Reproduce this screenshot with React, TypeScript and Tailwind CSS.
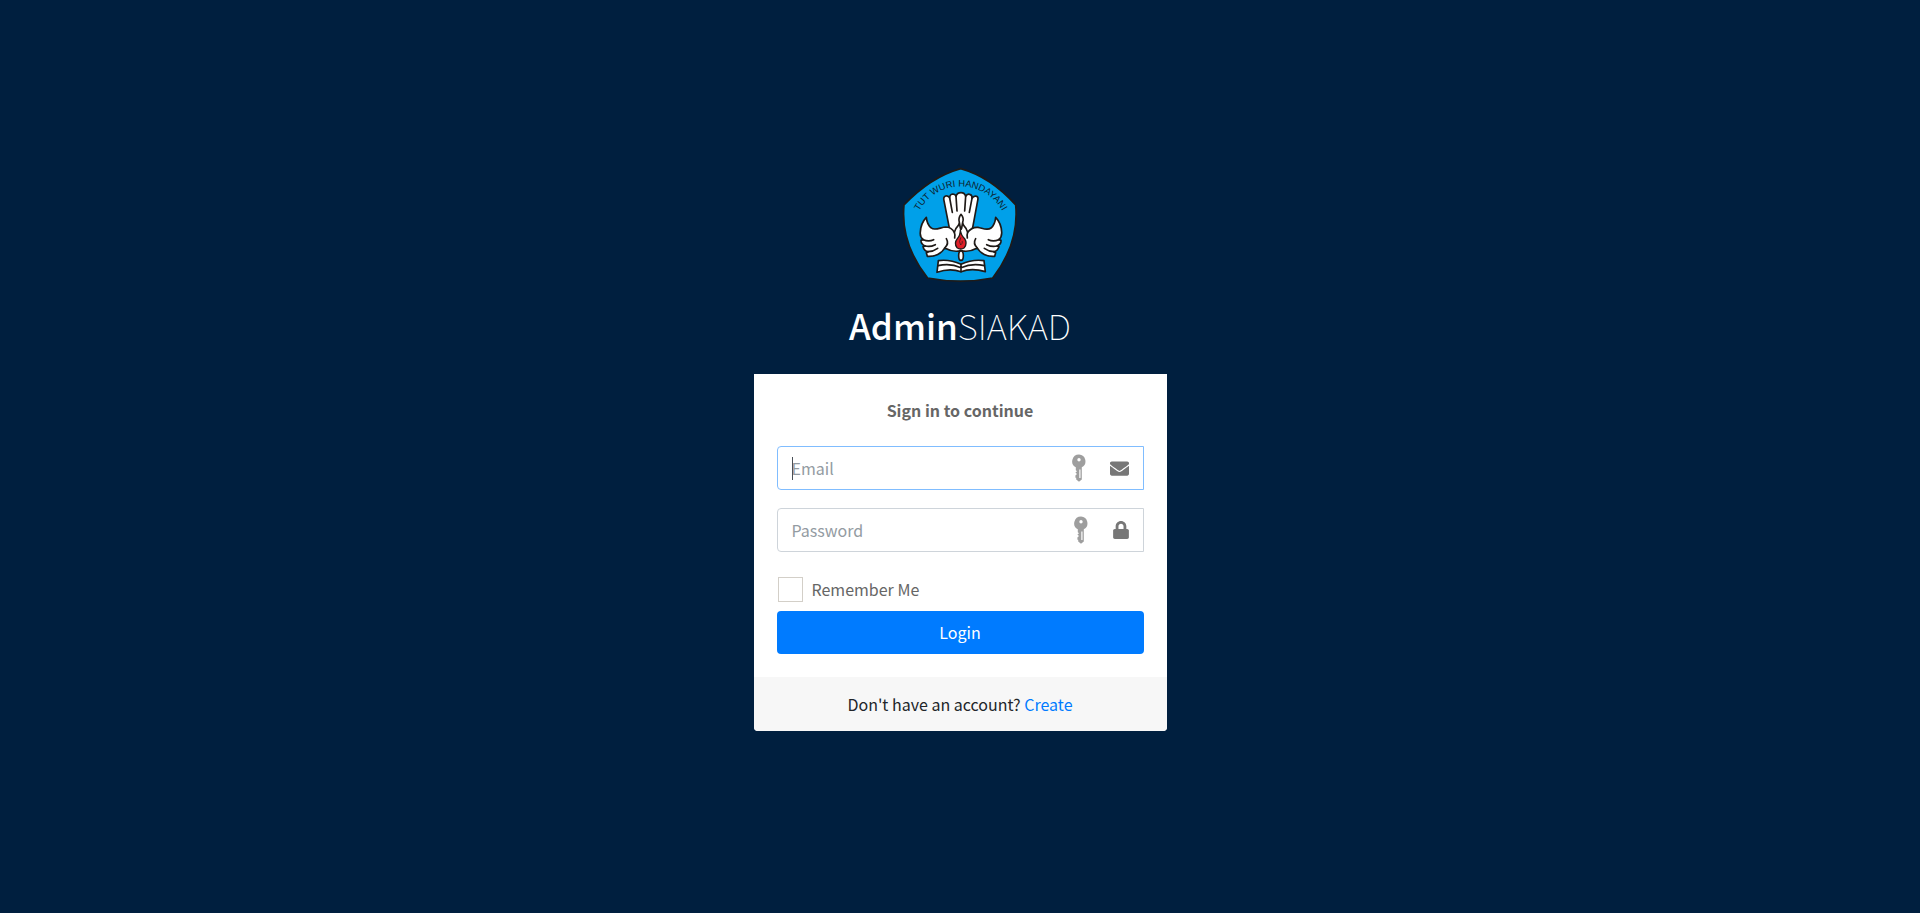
import React from "react";

function Emblem() {
  return (
    <svg viewBox="0 0 390 390" className="size-[130px]" role="img" aria-label="Tut Wuri Handayani">
      <path
        d="M197 26Q287 51 362 135Q373 250 293 354Q197 373 98 354Q16 250 27 135Q107 51 197 26Z"
        fill="#00a0e9"
        stroke="#1f1a17"
        strokeWidth="5"
        strokeLinejoin="round"
      />
      <path id="motto" d="M60 184A142 142 0 0 1 334 184" fill="none" />
      <text fill="#0d222e" fontSize="28" className="font-['Liberation_Sans',sans-serif]">
        <textPath href="#motto" startOffset="50%" textAnchor="middle">
          TUT WURI HANDAYANI
        </textPath>
      </text>
      <g fill="#fff" stroke="#1f1a17" strokeWidth="5" strokeLinejoin="round" strokeLinecap="round">
        <path d="M168 230L147 122Q144 111 152 108Q160 106 164 114Q164 103 173 102Q181 102 183 109Q186 98 198 98Q209 98 212 109Q216 101 224 103Q232 104 231 115Q236 106 245 109Q251 112 248 122L228 230Z" />
        <path fill="none" d="M164 114L172 157M183 109L186 153M212 109L209 153M231 115L223 157" />
        <path d="M198 272C185 275 165 273 149 264C141 280 119 291 97 289L94 278L100 275Q87 274 84 260L91 258Q78 254 78 241L85 239Q74 231 76 216Q77 190 94 172Q96 194 109 204C119 213 137 202 152 201C164 201 173 208 178 217Q181 205 190 196L198 180L206 196Q215 205 218 217C226 206 236 201 249 202C264 205 277 213 288 204Q300 194 302 172Q319 190 320 216Q321 231 311 239L318 241Q319 253 306 258L312 260Q307 274 296 275L302 278L299 289C277 291 255 280 247 264C231 273 211 275 198 272Z" />
        <path fill="none" d="M85 239Q101 246 116 239M91 258Q105 262 121 254M100 275Q114 275 128 265M311 239Q295 246 280 239M306 258Q291 262 275 254M296 275Q282 275 268 265M149 264C158 256 160 246 154 236M247 264C238 256 236 246 242 236M178 217Q181 225 179 234M218 217Q215 225 217 234" />
        <path d="M130 302Q163 297 198 313Q233 297 267 302L271 335Q231 323 198 335Q164 323 126 337Z" />
        <path fill="none" d="M129 317Q165 308 198 323Q232 308 268 317M198 313V335" />
        <ellipse cx="198" cy="287" rx="7" ry="14" />
        <path d="M198 163Q189 175 193 187L196 204Q198 212 200 204L203 187Q208 175 198 163Z" />
        <path d="M196 210Q198 226 209 236Q218 251 208 263Q197 271 186 263Q176 250 187 236Q196 226 196 210Z" fill="#df1f28" strokeWidth="4" />
        <path d="M197 233Q190 246 197 255Q204 250 202 244" fill="none" strokeWidth="2" />
      </g>
    </svg>
  );
}

function KeyIcon() {
  return (
    <svg viewBox="0 0 14 28" className="h-7 w-3.5" fill="#9e9e9e" aria-hidden="true">
      <path
        fillRule="evenodd"
        d="M7 0.5A6.8 6.8 0 0 0 3.8 13.3V16.2L5 17.2L3.4 18.5L5 20L3.4 21.6V23.8H4.2V25.4L7 27.7L9.8 25.4V13.3A6.8 6.8 0 0 0 7 .5ZM7 4A1.7 1.7 0 1 1 7 7.4A1.7 1.7 0 1 1 7 4ZM7.3 15.5H8.5V24H7.3Z"
      />
    </svg>
  );
}

function MailIcon() {
  return (
    <svg viewBox="0 0 512 512" className="size-[19px]" fill="#777" aria-hidden="true">
      <path d="M502.3 190.8c3.9-3.1 9.7-.2 9.7 4.7V400c0 26.5-21.5 48-48 48H48c-26.5 0-48-21.5-48-48V195.600c0-5 5.700-7.800 9.700-4.700 22.400 17.400 52.100 39.500 154.100 113.600 21.100 15.400 56.700 47.800 92.200 47.600 35.700.3 72-32.800 92.300-47.600 102-74.100 131.600-96.300 154-113.700zM256 320c23.200.4 56.600-29.200 73.400-41.400 132.700-96.300 142.800-104.700 173.400-128.700 5.800-4.500 9.200-11.500 9.200-18.900v-19c0-26.500-21.500-48-48-48H48c-26.500 0-48 21.500-48 48v19c0 7.400 3.400 14.300 9.200 18.900 30.600 23.900 40.700 32.400 173.400 128.700 16.800 12.200 50.200 41.800 73.400 41.400z" />
    </svg>
  );
}

function LockIcon() {
  return (
    <svg viewBox="0 0 448 512" className="h-[18px] w-4" fill="#777" aria-hidden="true">
      <path d="M400 224h-24v-72C376 68.200 307.800 0 224 0S72 68.200 72 152v72H48c-26.500 0-48 21.500-48 48v192c0 26.500 21.500 48 48 48h352c26.500 0 48-21.500 48-48V272c0-26.500-21.500-48-48-48zm-104 0H152v-72c0-39.700 32.300-72 72-72s72 32.300 72 72v72z" />
    </svg>
  );
}

const fieldText =
  "h-full min-w-0 flex-1 bg-transparent text-[#495057] outline-none placeholder:text-[#939ba2]";

export default function App() {
  return (
    <main className="flex min-h-screen flex-col items-center justify-center bg-[#001f3f] pb-[22px] font-['Noto_Sans_CJK_SC',sans-serif] text-base leading-7 text-[#212529]">
      <Emblem />
      <h1 className="mt-2.5 mb-6 text-[35px] leading-[50px] font-medium text-white">
        Admin<span className="font-thin">SIAKAD</span>
      </h1>
      <section className="w-full max-w-[413px] overflow-hidden rounded-b bg-white">
        <form className="flex flex-col p-[23px] pt-[22px]" onSubmit={(e) => e.preventDefault()}>
          <p className="mb-[22px] text-center font-bold text-[#666]">Sign in to continue</p>
          <div className="relative mb-[18px] flex h-11 items-center rounded-l border border-[#80bdff] px-3.5">
            <span className="absolute top-2.5 left-3.5 h-[23px] w-px bg-[#495057]" />
            <input type="email" aria-label="Email" placeholder="Email" className={fieldText} />
            <span className="mr-6"><KeyIcon /></span>
            <MailIcon />
          </div>
          <div className="mb-[25px] flex h-11 items-center rounded-l border border-[#ced4da] px-3.5">
            <input type="password" aria-label="Password" placeholder="Password" className={fieldText} />
            <span className="mr-[25px]"><KeyIcon /></span>
            <LockIcon />
          </div>
          <label className="mb-[9px] flex items-center gap-[9px] pl-px text-[#666]">
            <input
              type="checkbox"
              className="size-[25px] appearance-none border border-[#d3cfc8] bg-white checked:bg-[#007bff]"
            />
            <span className="leading-[25px]">Remember Me</span>
          </label>
          <button type="submit" className="h-[43px] rounded bg-[#007bff] pb-0.5 text-white">
            Login
          </button>
        </form>
        <footer className="bg-[#f7f7f7] py-[13px] text-center">
          Don't have an account?{" "}
          <a href="#create" className="text-[#007bff]">
            Create
          </a>
        </footer>
      </section>
    </main>
  );
}
